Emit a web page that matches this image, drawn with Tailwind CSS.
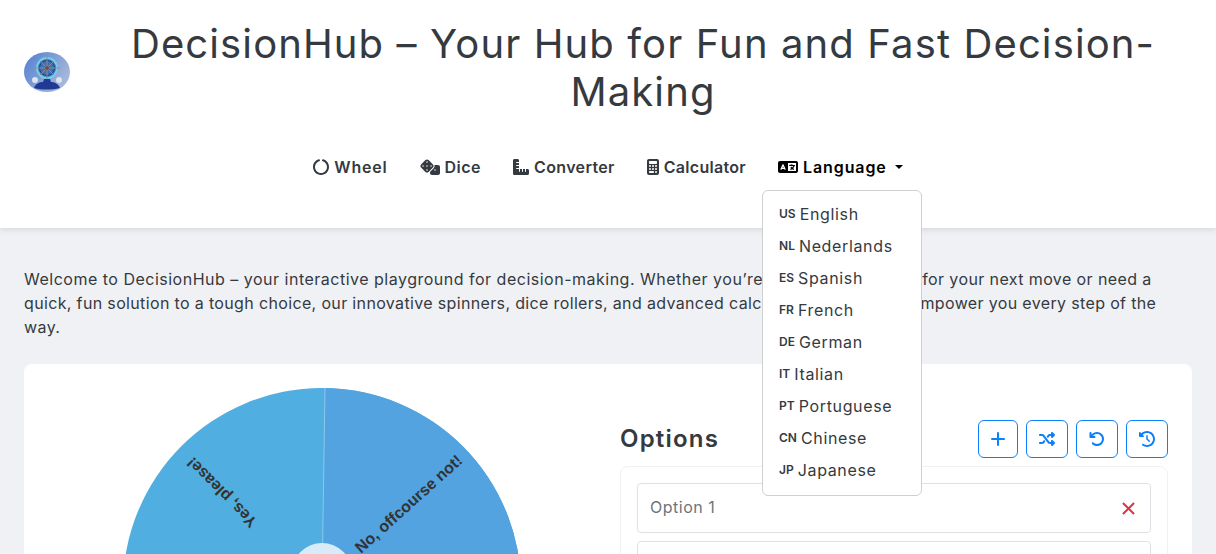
<!DOCTYPE html>
<html lang="en">
<head>
    <meta charset="UTF-8">
    <meta name="viewport" content="width=device-width, initial-scale=1.0">
    <title>DecisionHub</title>
    <script src="https://cdn.jsdelivr.net/npm/@tailwindcss/browser@4"></script>
</head>
<body class="h-[554px] overflow-hidden bg-[#f0f1f5] font-['Inter',sans-serif] text-[#343a40]">
    <header class="relative z-10 h-[228px] bg-white pt-5 shadow-[0_2px_6px_rgba(0,0,0,0.1)]">
        <div class="flex items-center pl-6">
            <svg class="mt-2 h-10 w-[46px] shrink-0" viewBox="0 0 46 40">
                <defs>
                    <linearGradient id="logoBg" x1="0" y1="0" x2="1" y2="0.6">
                        <stop offset="0" stop-color="#4f7fd0"></stop>
                        <stop offset="1" stop-color="#a9b8dc"></stop>
                    </linearGradient>
                </defs>
                <ellipse cx="23" cy="20" rx="23" ry="20" fill="url(#logoBg)"></ellipse>
                <circle cx="23" cy="16" r="10" fill="#3f6fb4" stroke="#6fd0e8" stroke-width="2"></circle>
                <circle cx="23" cy="16" r="7.5" fill="none" stroke="#27407f" stroke-width="1"></circle>
                <path d="M23 3v26M10 16h26M16 9l14 14M30 9L16 23" stroke="#8a8f9c" stroke-width="1"></path>
                <circle cx="23" cy="16" r="2" fill="#7b4a3a"></circle>
                <path d="M10 36c2-5 6-6 9-6l1-3h6l1 3c3 0 7 1 9 6c-8 2-18 2-26 0z" fill="#1f3a94"></path>
                <circle cx="11" cy="28" r="3" fill="#dfe3ea"></circle>
                <circle cx="35" cy="28" r="3" fill="#dfe3ea"></circle>
            </svg>
            <h1 class="flex-1 text-center text-[40px] leading-[48px] font-normal tracking-[1.12px] text-[#343a40]">DecisionHub – Your Hub for Fun and Fast Decision-<br>Making</h1>
        </div>
        <nav class="mt-[31px] flex h-10 justify-center text-base font-semibold">
            <a href="#" class="flex items-center gap-[5px] px-4 tracking-[0.8px]">
                <svg class="size-4" viewBox="0 0 512 512" fill="currentColor"><path d="M222.7 32.1c5 16.9-4.6 34.8-21.5 39.8C121.8 95.6 64 169.1 64 256c0 106 86 192 192 192s192-86 192-192c0-86.9-57.8-160.4-137.1-184.1c-16.9-5-26.6-22.9-21.5-39.8s22.9-26.6 39.8-21.5C434.9 42.1 512 140 512 256c0 141.4-114.6 256-256 256S0 397.4 0 256C0 140 77.1 42.1 182.9 10.6c16.9-5 34.8 4.6 39.8 21.5z"></path></svg>
                Wheel
            </a>
            <a href="#" class="flex items-center gap-[5px] px-4 tracking-[0.5px]">
                <svg class="h-4 w-5" viewBox="0 0 640 512" fill="currentColor"><path d="M274.9 34.3c-28.1-28.1-73.7-28.1-101.8 0L34.3 173.1c-28.1 28.1-28.1 73.7 0 101.8L173.1 413.7c28.1 28.1 73.7 28.1 101.8 0L413.7 274.9c28.1-28.1 28.1-73.7 0-101.8L274.9 34.3zM200 224a24 24 0 1 1 48 0 24 24 0 1 1 -48 0zM96 200a24 24 0 1 1 0 48 24 24 0 1 1 0-48zM224 376a24 24 0 1 1 0-48 24 24 0 1 1 0 48zM352 200a24 24 0 1 1 0 48 24 24 0 1 1 0-48zM224 120a24 24 0 1 1 0-48 24 24 0 1 1 0 48zm96 328c0 35.3 28.7 64 64 64H576c35.3 0 64-28.7 64-64V256c0-35.3-28.7-64-64-64H461.7c11.6 36 3.1 77-25.4 105.5L320 413.8V448zM480 328a24 24 0 1 1 0 48 24 24 0 1 1 0-48z"></path></svg>
                Dice
            </a>
            <a href="#" class="flex items-center gap-[5px] px-4 tracking-[0.35px]">
                <svg class="size-4" viewBox="0 0 512 512" fill="currentColor"><path d="M.2 468.9C2.7 493.1 23.1 512 48 512l96 0 320 0c26.5 0 48-21.5 48-48l0-96c0-26.5-21.5-48-48-48l-48 0 0 80c0 8.8-7.2 16-16 16s-16-7.2-16-16l0-80-64 0 0 80c0 8.8-7.2 16-16 16s-16-7.2-16-16l0-80-64 0 0 80c0 8.8-7.2 16-16 16s-16-7.2-16-16l0-80-80 0c-8.8 0-16-7.2-16-16s7.2-16 16-16l80 0 0-64-80 0c-8.8 0-16-7.2-16-16s7.2-16 16-16l80 0 0-64-80 0c-8.8 0-16-7.2-16-16s7.2-16 16-16l80 0 0-48c0-26.5-21.5-48-48-48L48 0C21.5 0 0 21.5 0 48L0 368l0 96c0 1.7 .1 3.3 .2 4.9z"></path></svg>
                Converter
            </a>
            <a href="#" class="flex items-center gap-[5px] px-4 tracking-[0.3px]">
                <svg class="h-4 w-3" viewBox="0 0 384 512" fill="currentColor"><path d="M64 0C28.7 0 0 28.7 0 64V448c0 35.3 28.7 64 64 64H320c35.3 0 64-28.7 64-64V64c0-35.3-28.7-64-64-64H64zM96 64H288c17.7 0 32 14.3 32 32v32c0 17.7-14.3 32-32 32H96c-17.7 0-32-14.3-32-32V96c0-17.7 14.3-32 32-32zm32 160a32 32 0 1 1 -64 0 32 32 0 1 1 64 0zM96 352a32 32 0 1 1 0-64 32 32 0 1 1 0 64zM64 416c0-17.7 14.3-32 32-32h96c17.7 0 32 14.3 32 32s-14.3 32-32 32H96c-17.7 0-32-14.3-32-32zM192 256a32 32 0 1 1 0-64 32 32 0 1 1 0 64zm32 64a32 32 0 1 1 -64 0 32 32 0 1 1 64 0zm64-64a32 32 0 1 1 0-64 32 32 0 1 1 0 64zm32 64a32 32 0 1 1 -64 0 32 32 0 1 1 64 0zM288 448a32 32 0 1 1 0-64 32 32 0 1 1 0 64z"></path></svg>
                Calculator
            </a>
            <div class="relative">
                <button class="flex h-10 items-center gap-[5px] px-4 font-semibold tracking-[0.9px] text-black">
                    <svg class="h-4 w-5" viewBox="0 0 640 512" fill="currentColor"><path d="M0 128C0 92.7 28.7 64 64 64H256h48 16H576c35.3 0 64 28.7 64 64V384c0 35.3-28.7 64-64 64H320 304 256 64c-35.3 0-64-28.7-64-64V128zm320 0V384H576V128H320zM178.3 175.9c-3.2-7.2-10.4-11.9-18.3-11.9s-15.1 4.7-18.3 11.9l-64 144c-4.5 10.1 .1 21.9 10.2 26.4s21.9-.1 26.4-10.2l8.9-20.1h73.6l8.9 20.1c4.5 10.1 16.3 14.6 26.4 10.2s14.6-16.3 10.2-26.4l-64-144zM160 233.2L179 276H141l19-42.8zM448 164c11 0 20 9 20 20v4h44 16c11 0 20 9 20 20s-9 20-20 20h-2l-1.6 4.5c-8.9 24.4-22.4 46.6-39.6 65.4c.9 .6 1.8 1.1 2.7 1.6l18.9 11.3c9.5 5.7 12.5 18 6.9 27.4s-18 12.5-27.4 6.9l-18.9-11.3c-4.5-2.7-8.8-5.5-13.1-8.5c-10.6 7.5-21.9 14-34 19.4l-3.6 1.6c-10.1 4.5-21.9-.1-26.4-10.2s.1-21.9 10.2-26.4l3.6-1.6c6.4-2.9 12.6-6.1 18.5-9.8l-12.2-12.2c-7.8-7.8-7.8-20.5 0-28.3s20.5-7.8 28.3 0l14.6 14.6 .5 .5c12.4-13.1 22.5-28.3 29.8-45H448 376c-11 0-20-9-20-20s9-20 20-20h52v-4c0-11 9-20 20-20z"></path></svg>
                    Language
                    <span class="ml-[3px] h-0 w-0 border-x-4 border-t-4 border-x-transparent border-t-black"></span>
                </button>
                <ul class="absolute top-[43px] left-0 w-40 rounded-md border border-[#ced0d2] bg-white py-2 text-base font-normal tracking-[0.65px]">
                    <li class="flex h-8 items-center gap-1 px-4 pb-0.5"><span class="text-xs font-semibold tracking-normal">US</span>English</li>
                    <li class="flex h-8 items-center gap-1 px-4 pb-0.5"><span class="text-xs font-semibold tracking-normal">NL</span>Nederlands</li>
                    <li class="flex h-8 items-center gap-1 px-4 pb-0.5"><span class="text-xs font-semibold tracking-normal">ES</span>Spanish</li>
                    <li class="flex h-8 items-center gap-1 px-4 pb-0.5"><span class="text-xs font-semibold tracking-normal">FR</span>French</li>
                    <li class="flex h-8 items-center gap-1 px-4 pb-0.5"><span class="text-xs font-semibold tracking-normal">DE</span>German</li>
                    <li class="flex h-8 items-center gap-1 px-4 pb-0.5"><span class="text-xs font-semibold tracking-normal">IT</span>Italian</li>
                    <li class="flex h-8 items-center gap-1 px-4 pb-0.5"><span class="text-xs font-semibold tracking-normal">PT</span>Portuguese</li>
                    <li class="flex h-8 items-center gap-1 px-4 pb-0.5"><span class="text-xs font-semibold tracking-normal">CN</span>Chinese</li>
                    <li class="flex h-8 items-center gap-1 px-4 pb-0.5"><span class="text-xs font-semibold tracking-normal">JP</span>Japanese</li>
                </ul>
            </div>
        </nav>
    </header>

    <main class="px-6 pt-[39px]">
        <p class="text-base leading-6">
            <span class="tracking-[0.5px]">Welcome to DecisionHub – your interactive playground for decision-making. Whether you’re</span>
            <span class="tracking-[0.4px]">seeking inspiration for your next move or need a</span><br>
            <span class="tracking-[0.35px]">quick, fun solution to a tough choice, our innovative spinners, dice rollers, and advanced calculators are here to empower you every step of the</span><br>
            <span class="tracking-[0.4px]">way.</span>
        </p>

        <section class="mt-[25px] grid h-[400px] grid-cols-2 gap-6 rounded-lg bg-white p-6">
            <div class="flex justify-center">
                <svg class="size-[400px] shrink-0" viewBox="0 0 400 400">
                    <circle cx="200" cy="199" r="199" fill="#50aee0"></circle>
                    <path d="M200 199L203 0A199 199 0 0 1 399 199z" fill="#52a3e0"></path>
                    <path d="M200 199L203 0" stroke="#8cc8ec" stroke-width="1"></path>
                    <circle cx="200" cy="185" r="30" fill="#d8ebf8"></circle>
                    <text transform="translate(239 166) rotate(-42)" font-family="Liberation Sans" font-size="16" font-weight="700" fill="#333">No, offcourse not!</text>
                    <text transform="translate(136 133) rotate(-135)" font-family="Liberation Sans" font-size="16" font-weight="700" fill="#333">Yes, please!</text>
                </svg>
            </div>
            <div>
                <div class="mt-8 flex items-center justify-between">
                    <h2 class="text-2xl font-semibold tracking-[1.2px]">Options</h2>
                    <div class="flex gap-2 text-[#0d7ffb]">
                        <button class="flex h-[38px] w-10 items-center justify-center rounded-md border border-[#0d7ffb]">
                            <svg class="size-3.5" viewBox="0 0 14 14" fill="none" stroke="currentColor" stroke-width="2" stroke-linecap="round"><path d="M7 1v12M1 7h12"></path></svg>
                        </button>
                        <button class="flex h-[38px] w-[42px] items-center justify-center rounded-md border border-[#0d7ffb]">
                            <svg class="size-4" viewBox="0 0 512 512" fill="currentColor"><path d="M403.8 34.4c12-5 25.7-2.2 34.9 6.9l64 64c6 6 9.4 14.1 9.4 22.6s-3.4 16.6-9.4 22.6l-64 64c-9.2 9.2-22.9 11.9-34.9 6.9s-19.8-16.6-19.8-29.6V160H352c-10.1 0-19.6 4.7-25.6 12.8L284 229.3 244 176l31.2-41.6C293.3 110.2 321.8 96 352 96h32V64c0-12.9 7.8-24.6 19.8-29.6zM164 282.7L204 336l-31.2 41.6C154.7 401.8 126.2 416 96 416H32c-17.7 0-32-14.3-32-32s14.3-32 32-32H96c10.1 0 19.6-4.7 25.6-12.8L164 282.7zm274.6 188c-9.2 9.2-22.9 11.9-34.9 6.9s-19.8-16.6-19.8-29.6V416H352c-30.2 0-58.7-14.2-76.8-38.4L121.6 172.8c-6-8.1-15.5-12.8-25.6-12.8H32c-17.7 0-32-14.3-32-32s14.3-32 32-32H96c30.2 0 58.7 14.2 76.8 38.4L326.4 339.2c6 8.1 15.5 12.8 25.6 12.8h32V320c0-12.9 7.8-24.6 19.8-29.6s25.7-2.2 34.9 6.9l64 64c6 6 9.4 14.1 9.4 22.6s-3.4 16.6-9.4 22.6l-64 64z"></path></svg>
                        </button>
                        <button class="flex h-[38px] w-[42px] items-center justify-center rounded-md border border-[#0d7ffb]">
                            <svg class="size-4" viewBox="0 0 512 512" fill="currentColor"><path d="M125.7 160H176c17.7 0 32 14.3 32 32s-14.3 32-32 32H48c-17.7 0-32-14.3-32-32V64c0-17.7 14.3-32 32-32s32 14.3 32 32v51.2L97.6 97.6c87.5-87.5 229.3-87.5 316.8 0s87.5 229.3 0 316.8s-229.3 87.5-316.8 0c-12.5-12.5-12.5-32.8 0-45.3s32.8-12.5 45.3 0c62.5 62.5 163.8 62.5 226.3 0s62.5-163.8 0-226.3s-163.8-62.5-226.3 0L125.7 160z"></path></svg>
                        </button>
                        <button class="flex h-[38px] w-[42px] items-center justify-center rounded-md border border-[#0d7ffb]">
                            <svg class="size-4" viewBox="0 0 512 512" fill="currentColor"><path d="M75 75L41 41C25.9 25.9 0 36.6 0 57.9V168c0 13.3 10.7 24 24 24H134.1c21.4 0 32.1-25.9 17-41l-30.8-30.8C155 85.5 203 64 256 64c106 0 192 86 192 192s-86 192-192 192c-40.8 0-78.6-12.7-109.7-34.4c-14.5-10.1-34.4-6.6-44.6 7.9s-6.6 34.4 7.9 44.6C151.2 495 201.7 512 256 512c141.4 0 256-114.6 256-256S397.4 0 256 0C185.3 0 121.3 28.7 75 75zm181 53c-13.3 0-24 10.7-24 24V256c0 6.4 2.5 12.5 7 17l72 72c9.4 9.4 24.6 9.4 33.9 0s9.4-24.6 0-33.9l-65-65V152c0-13.3-10.7-24-24-24z"></path></svg>
                        </button>
                    </div>
                </div>
                <div class="mt-2 rounded-lg border border-[#f1f1f1] p-4">
                    <div class="flex h-[50px] items-center justify-between rounded border border-[#dee2e6] px-3">
                        <span class="pb-0.5 text-base tracking-[0.5px] text-[#6c757d]">Option 1</span>
                        <svg class="mr-[3px] size-[13px] text-[#dc3545]" viewBox="0 0 14 14" fill="none" stroke="currentColor" stroke-width="2.2"><path d="M1 1l12 12M13 1L1 13"></path></svg>
                    </div>
                    <div class="mt-2 h-[50px] rounded border border-[#dee2e6]"></div>
                </div>
            </div>
        </section>
    </main>
</body>
</html>
